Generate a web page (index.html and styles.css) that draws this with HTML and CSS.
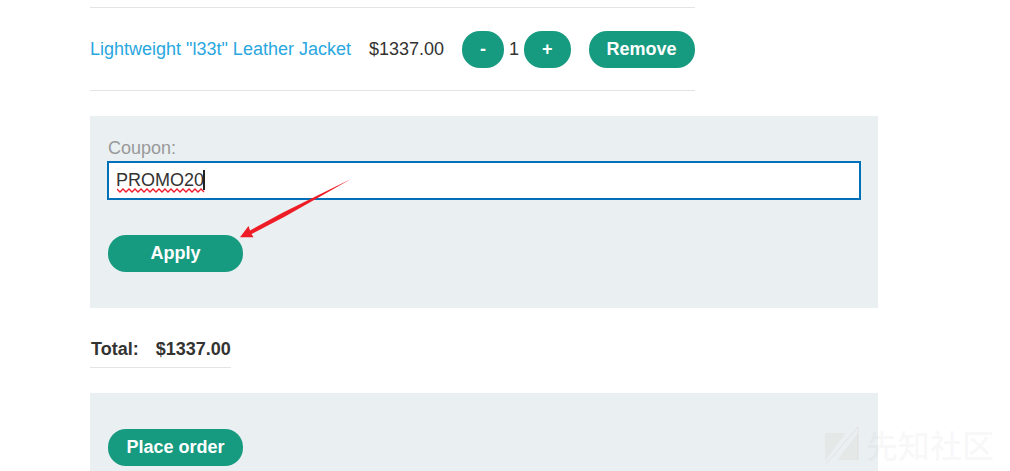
FILE: index.html
```html
<!DOCTYPE html>
<html lang="en">
<head>
<meta charset="utf-8">
<title>Cart</title>
<link rel="stylesheet" href="styles.css">
</head>
<body>
<main class="page">
  <table class="items">
    <tbody>
      <tr>
        <td class="text"><a class="product" href="#">Lightweight "l33t" Leather Jacket</a></td>
        <td class="text">$1337.00</td>
        <td>
          <div class="quantity">
            <button class="button" type="button">-</button>
            <span class="count">1</span>
            <button class="button" type="button">+</button>
          </div>
        </td>
        <td><button class="button" type="button">Remove</button></td>
      </tr>
    </tbody>
  </table>

  <form class="panel coupon">
    <label class="label" for="coupon">Coupon:</label>
    <div class="field">
      <input class="input" id="coupon" type="text" value="PROMO20" spellcheck="false">
      <svg class="spelling" width="90" height="24" viewBox="0 0 90 24" aria-hidden="true">
        <path class="squiggle" d="M0 19l3 3 3-3 3 3 3-3 3 3 3-3 3 3 3-3 3 3 3-3 3 3 3-3 3 3 3-3 3 3 3-3 3 3 3-3 3 3 3-3 3 3 3-3 3 3 3-3 3 3 3-3 3 3 3-3 3 3"/>
        <path class="caret" d="M86 0h2v20h-2z"/>
      </svg>
    </div>
    <button class="button wide" type="button">Apply</button>
    <svg class="arrow" width="112" height="62" viewBox="0 0 112 62" aria-hidden="true">
      <path d="M111 1L43 34.500 10 52.500 8.500 48 0 59.300l13.500 0-2-3.300L45 38.500Z"/>
    </svg>
  </form>

  <table class="total">
    <tbody>
      <tr><th scope="row">Total:</th><td>$1337.00</td></tr>
    </tbody>
  </table>

  <form class="panel order">
    <button class="button wide" type="button">Place order</button>
  </form>
</main>

<div class="watermark">
  <svg width="34" height="38" viewBox="0 0 34 38" aria-hidden="true">
    <path class="mark" d="M0 6h21L0 34zM33 6v27H12z"/>
    <path class="mark-line" d="M1 37L33 0v33"/>
  </svg>
  <span class="watermark-text">先知社区</span>
</div>
</body>
</html>
```
FILE: styles.css
```css
* {
  box-sizing: border-box;
}

html {
  height: 100%;
}

body {
  margin: 0;
  min-height: 100%;
  position: relative;
  background: #fff;
  color: #333332;
  font: 18px/22px "Liberation Sans", Arial, sans-serif;
}

.page {
  padding: 7px 132px 0 90px;
}

table {
  border-collapse: separate;
  border-spacing: 0;
}

.items {
  border-top: 1px solid #e4e4e4;
  border-bottom: 1px solid #e4e4e4;
}

.items td {
  padding: 23px 18px 22px 0;
  white-space: nowrap;
}

.items .text {
  padding-top: 22px;
  padding-bottom: 22px;
}

.items td:last-child {
  padding-right: 0;
}

.product {
  color: #29a7df;
  text-decoration: none;
}

.quantity {
  display: flex;
  align-items: center;
  gap: 5px;
}

.count {
  padding-bottom: 2px;
}

.button {
  height: 37px;
  padding: 0 18px 2px;
  border: 0;
  border-radius: 18px;
  background: #179b80;
  color: #fff;
  font: bold 18px/22px "Liberation Sans", Arial, sans-serif;
}

.wide {
  display: block;
  min-width: 135px;
}

.panel {
  background: #eaeff2;
}

.coupon {
  position: relative;
  margin-top: 25px;
  padding: 20px 17px 36px;
}

.label {
  display: block;
  padding: 0 1px 1px;
  line-height: 24px;
  color: #999;
}

.field {
  position: relative;
  margin-bottom: 35px;
}

.input {
  display: block;
  width: 100%;
  height: 39px;
  padding: 0 7px;
  border: 2px solid #0070b8;
  border-radius: 0;
  outline: 0;
  background: #fff;
  color: #333332;
  font: 18px/22px "Liberation Sans", Arial, sans-serif;
}

.spelling {
  position: absolute;
  left: 10px;
  top: 9px;
}

.squiggle {
  fill: none;
  stroke: #f0182a;
  stroke-width: 1.3;
}

.caret {
  fill: #222;
}

.coupon .button {
  margin-left: 1px;
}

.arrow {
  position: absolute;
  left: 150px;
  top: 62px;
  fill: #ee1c25;
}

.total {
  margin-top: 30px;
  border-bottom: 1px solid #e4e4e4;
  font-weight: bold;
}

.total th,
.total td {
  padding: 0 0 7px 17px;
}

.total th {
  padding-left: 1px;
}

.order {
  margin-top: 25px;
  padding: 36px 18px 5px;
}

.watermark {
  position: absolute;
  right: 16px;
  bottom: 5px;
  display: flex;
  align-items: center;
  gap: 7px;
  color: rgba(150, 150, 150, 0.08);
  font: 500 32px/36px "Noto Sans CJK SC", sans-serif;
}

.watermark-text {
  padding-bottom: 4px;
}

.mark {
  fill: rgba(180, 180, 130, 0.1);
}

.mark-line {
  fill: none;
  stroke: rgba(190, 150, 150, 0.15);
}
```
